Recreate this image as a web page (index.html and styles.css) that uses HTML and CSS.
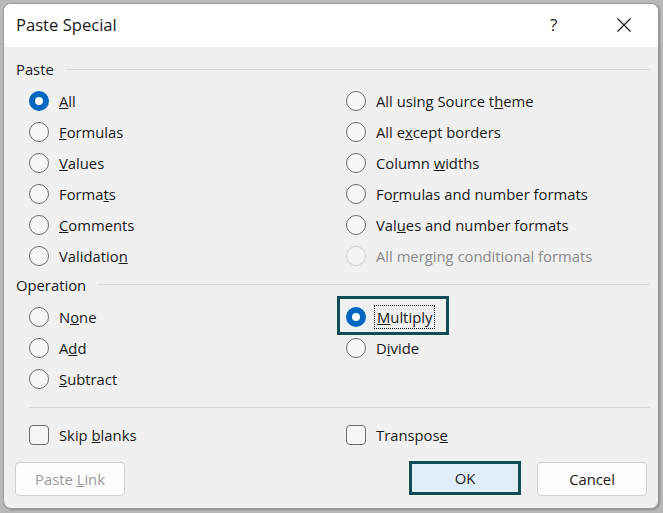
FILE: index.html
```html
<!DOCTYPE html>
<html>
<head>
<meta charset="utf-8">
<link rel="stylesheet" href="styles.css">
</head>
<body>
<div class="window">
  <div class="titlebar">
    <span class="title">Paste Special</span>
    <span class="help">?</span>
    <span class="close"><svg width="16" height="16" viewBox="0 0 16 16"><path d="M1.5 1.5 L14.5 14.5 M14.5 1.5 L1.5 14.5" stroke="#1b1b1b" stroke-width="1.2" fill="none"/></svg></span>
  </div>
  <div class="content">
    <div class="group-head first"><span>Paste</span><span class="rule"></span></div>
    <div class="grid">
      <div class="opt"><span class="radio checked"></span><span><u>A</u>ll</span></div>
      <div class="opt"><span class="radio"></span><span>All using Source t<u>h</u>eme</span></div>
      <div class="opt"><span class="radio"></span><span><u>F</u>ormulas</span></div>
      <div class="opt"><span class="radio"></span><span>All e<u>x</u>cept borders</span></div>
      <div class="opt"><span class="radio"></span><span><u>V</u>alues</span></div>
      <div class="opt"><span class="radio"></span><span>Column <u>w</u>idths</span></div>
      <div class="opt"><span class="radio"></span><span>Forma<u>t</u>s</span></div>
      <div class="opt"><span class="radio"></span><span>Fo<u>r</u>mulas and number formats</span></div>
      <div class="opt"><span class="radio"></span><span><u>C</u>omments</span></div>
      <div class="opt"><span class="radio"></span><span>Val<u>u</u>es and number formats</span></div>
      <div class="opt"><span class="radio"></span><span>Validatio<u>n</u></span></div>
      <div class="opt disabled"><span class="radio"></span><span>All merging conditional formats</span></div>
    </div>
    <div class="group-head op"><span>Operation</span><span class="rule"></span></div>
    <div class="grid">
      <div class="opt"><span class="radio"></span><span>N<u>o</u>ne</span></div>
      <div class="opt focused"><span class="radio checked"></span><span class="focus-text"><u>M</u>ultiply</span></div>
      <div class="opt"><span class="radio"></span><span>A<u>d</u>d</span></div>
      <div class="opt"><span class="radio"></span><span>D<u>i</u>vide</span></div>
      <div class="opt"><span class="radio"></span><span><u>S</u>ubtract</span></div>
      <div class="opt"></div>
    </div>
    <div class="sep"></div>
    <div class="grid checks">
      <div class="opt"><span class="check"></span><span>Skip <u>b</u>lanks</span></div>
      <div class="opt"><span class="check"></span><span>Transpos<u>e</u></span></div>
    </div>
    <div class="buttons">
      <button class="btn disabled-btn">Paste <u>L</u>ink</button>
      <span class="spacer"></span>
      <button class="btn default">OK</button>
      <button class="btn">Cancel</button>
    </div>
  </div>
</div>
</body>
</html>
```

FILE: styles.css
```css
html, body {
  margin: 0;
  padding: 0;
}
body {
  width: 663px;
  height: 513px;
  background: #b9b9b9;
  font-family: "Open Sans", "Noto Sans", sans-serif;
  font-size: 14.8px;
  color: #1a1a1a;
  overflow: hidden;
}
.window {
  box-sizing: border-box;
  margin: 3px 0 0 3px;
  width: 656px;
  height: 506px;
  border: 1px solid #9a9a9a;
  border-radius: 8px;
  background: #f0f0f0;
  overflow: hidden;
  box-shadow: 1px 1px 2px rgba(0,0,0,0.25);
}
.titlebar {
  height: 43px;
  background: #ffffff;
  display: flex;
  align-items: center;
  padding-left: 12px;
}
.title {
  font-size: 16.6px;
  flex: 1;
  padding-bottom: 2px;
}
.help {
  font-size: 17px;
  color: #222;
  width: 18px;
  margin-right: 48px;
  padding-bottom: 3px;
}
.close {
  display: flex;
  margin-right: 26px;
  padding-bottom: 2px;
}
.content {
  padding: 7px 8px 0 12px;
}
.group-head {
  height: 30px;
  display: flex;
  align-items: center;
  gap: 12px;
}
.group-head.first {
  height: 31px;
  padding-bottom: 1px;
  box-sizing: border-box;
}
.group-head .rule {
  flex: 1;
  height: 1px;
  background: #dadada;
}
.group-head.op {
  height: 30px;
  padding-bottom: 3px;
  box-sizing: border-box;
}
.grid {
  display: grid;
  grid-template-columns: 317px 1fr;
  padding-left: 13px;
}
.opt {
  height: 31px;
  display: flex;
  align-items: center;
  gap: 10px;
  position: relative;
}
.radio {
  box-sizing: border-box;
  width: 20px;
  height: 20px;
  border-radius: 50%;
  border: 1px solid #6b6b6b;
  background: #f6f6f6;
  flex: none;
}
.radio.checked {
  border: 6px solid #0067c0;
  background: #ffffff;
}
.disabled {
  color: #8a8a8a;
}
.disabled .radio {
  border-color: #cfcfcf;
  background: #f4f4f4;
}
.focused::after {
  content: "";
  position: absolute;
  left: -9px;
  top: -5px;
  width: 106px;
  height: 33px;
  border: 3px solid #0e4d51;
}
.focus-text {
  outline: 1px dotted #111;
  outline-offset: 1px;
  padding: 0 1px;
}
.sep {
  margin: 13px 0 0 13px;
  height: 1px;
  background: #dadada;
}
.checks .opt {
  height: 30px;
}
.checks {
  margin-top: 12px;
}
.check {
  box-sizing: border-box;
  width: 20px;
  height: 20px;
  border-radius: 4px;
  border: 1px solid #6b6b6b;
  background: #f6f6f6;
  flex: none;
}
.buttons {
  display: flex;
  margin-top: 12px;
  margin-left: -1px;
  margin-right: 3px;
  gap: 16px;
}
.spacer {
  flex: 1;
}
.btn {
  box-sizing: border-box;
  width: 110px;
  height: 34px;
  background: #fdfdfd;
  border: 1px solid #d0d0d0;
  border-radius: 4px;
  font-family: "Open Sans", "Noto Sans", sans-serif;
  font-size: 14.8px;
  color: #1a1a1a;
  padding: 0;
}
.disabled-btn {
  color: #9a9a9a;
}
.default {
  width: 112px;
  border: 3px solid #0e4d51;
  border-radius: 0;
  background: #e0eef9;
  margin-top: -1px;
}
```
